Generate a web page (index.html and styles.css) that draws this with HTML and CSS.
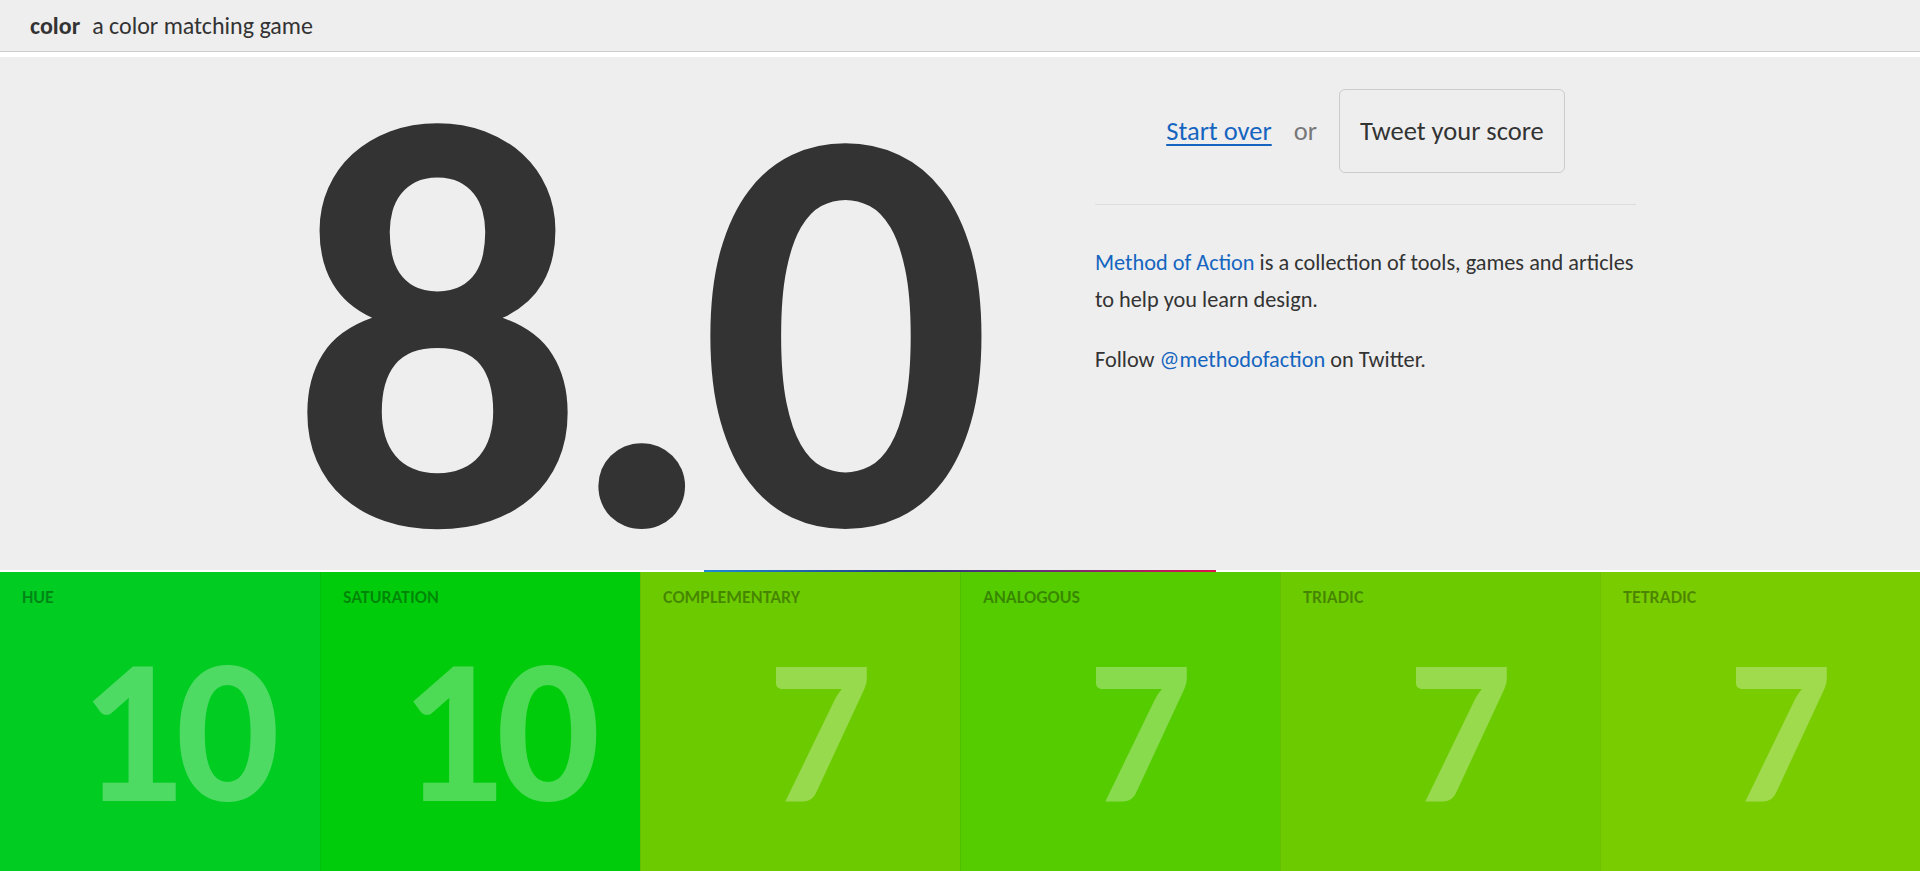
FILE: index.html
```html
<!DOCTYPE html>
<html lang="en">
<head>
<meta charset="utf-8">
<title>color - a color matching game</title>
<link rel="stylesheet" href="styles.css">
</head>
<body>
<header class="topbar">
  <span class="brand">color</span>
  <span class="tagline">a color matching game</span>
</header>
<main class="result">
  <div class="score">8.0</div>
  <section class="panel">
    <div class="actions">
      <a class="restart" href="#">Start over</a>
      <span class="or">or</span>
      <button class="tweet">Tweet your score</button>
    </div>
    <hr class="divider">
    <p class="about"><a href="#">Method of Action</a> is a collection of tools, games and articles to help you learn design.</p>
    <p class="about">Follow <a href="#">@methodofaction</a> on Twitter.</p>
  </section>
</main>
<div class="progress"></div>
<div class="tiles">
  <div class="tile t-hue"><div class="label">Hue</div><div class="num">10</div></div>
  <div class="tile t-sat"><div class="label">Saturation</div><div class="num">10</div></div>
  <div class="tile t-comp"><div class="label">Complementary</div><div class="num">7</div></div>
  <div class="tile t-ana"><div class="label">Analogous</div><div class="num">7</div></div>
  <div class="tile t-tri"><div class="label">Triadic</div><div class="num">7</div></div>
  <div class="tile t-tet"><div class="label">Tetradic</div><div class="num">7</div></div>
</div>
</body>
</html>
```
FILE: styles.css
```css
html, body {
  margin: 0;
  padding: 0;
  background: #fff;
  height: 100%;
  overflow: hidden;
}
body {
  font-family: "Carlito", "Lato", "Open Sans", sans-serif;
  color: #333;
}
.topbar {
  height: 51px;
  background: #eee;
  border-bottom: 1px solid #ccc;
  display: flex;
  align-items: center;
  padding-left: 30px;
  font-size: 24px;
  margin-bottom: 5px;
}
.brand {
  font-weight: 700;
  margin-right: 12px;
}
.result {
  background: #eee;
  height: 513px;
  display: flex;
  justify-content: space-between;
  padding: 0 284px 0 290px;
}
.score {
  font-size: 582px;
  line-height: 0.8;
  font-weight: 700;
  color: #333;
  margin-top: 37px;
  letter-spacing: -21px;
}
.panel {
  width: 541px;
  padding-top: 32px;
}
.actions {
  display: flex;
  align-items: center;
  justify-content: center;
  height: 84px;
}
.restart {
  color: #1565c0;
  font-size: 26.5px;
  text-decoration: underline;
  text-decoration-thickness: 2px;
  text-underline-offset: 4px;
}
.or {
  color: #777;
  font-size: 26.5px;
  margin: 0 22px;
}
.tweet {
  height: 84px;
  padding: 0 20px;
  background: #eee;
  border: 1px solid #ccc;
  border-radius: 6px;
  font-family: inherit;
  font-size: 26.5px;
  color: #333;
}
.divider {
  border: 0;
  border-top: 1px solid #ddd;
  margin: 31px 0 0;
}
.about {
  margin: 39px -12px 0 0;
  font-size: 22.3px;
  line-height: 37px;
}
.about + .about {
  margin-top: 23px;
}
.about a {
  color: #1565c0;
  text-decoration: none;
}
.progress {
  height: 2px;
  width: 512px;
  margin-left: 704px;
  background: linear-gradient(to right, #1e88d8, #233a80 40%, #6a2e78 65%, #e0104e);
}
.tiles {
  display: grid;
  grid-template-columns: repeat(6, 1fr);
  height: 299px;
}
.tile {
  border-left: 1px solid rgba(0, 0, 0, 0.06);
  padding: 15px 0 0 22px;
}
.tile:first-child {
  border-left: 0;
}
.label {
  font-size: 18px;
  line-height: 20px;
  font-weight: 700;
  text-transform: uppercase;
  color: rgba(0, 0, 0, 0.34);
}
.num {
  margin-top: 21px;
  font-size: 206px;
  line-height: 1;
  font-weight: 700;
  text-align: center;
  padding-left: 9px;
  letter-spacing: -8px;
  color: rgba(255, 255, 255, 0.3);
}
.t-hue { background: #00cc22; }
.t-sat { background: #00cc0c; }
.t-comp { background: #6ccb00; }
.t-ana { background: #54cc00; }
.t-tri { background: #6ccb00; }
.t-tet { background: #78cc00; }
```
